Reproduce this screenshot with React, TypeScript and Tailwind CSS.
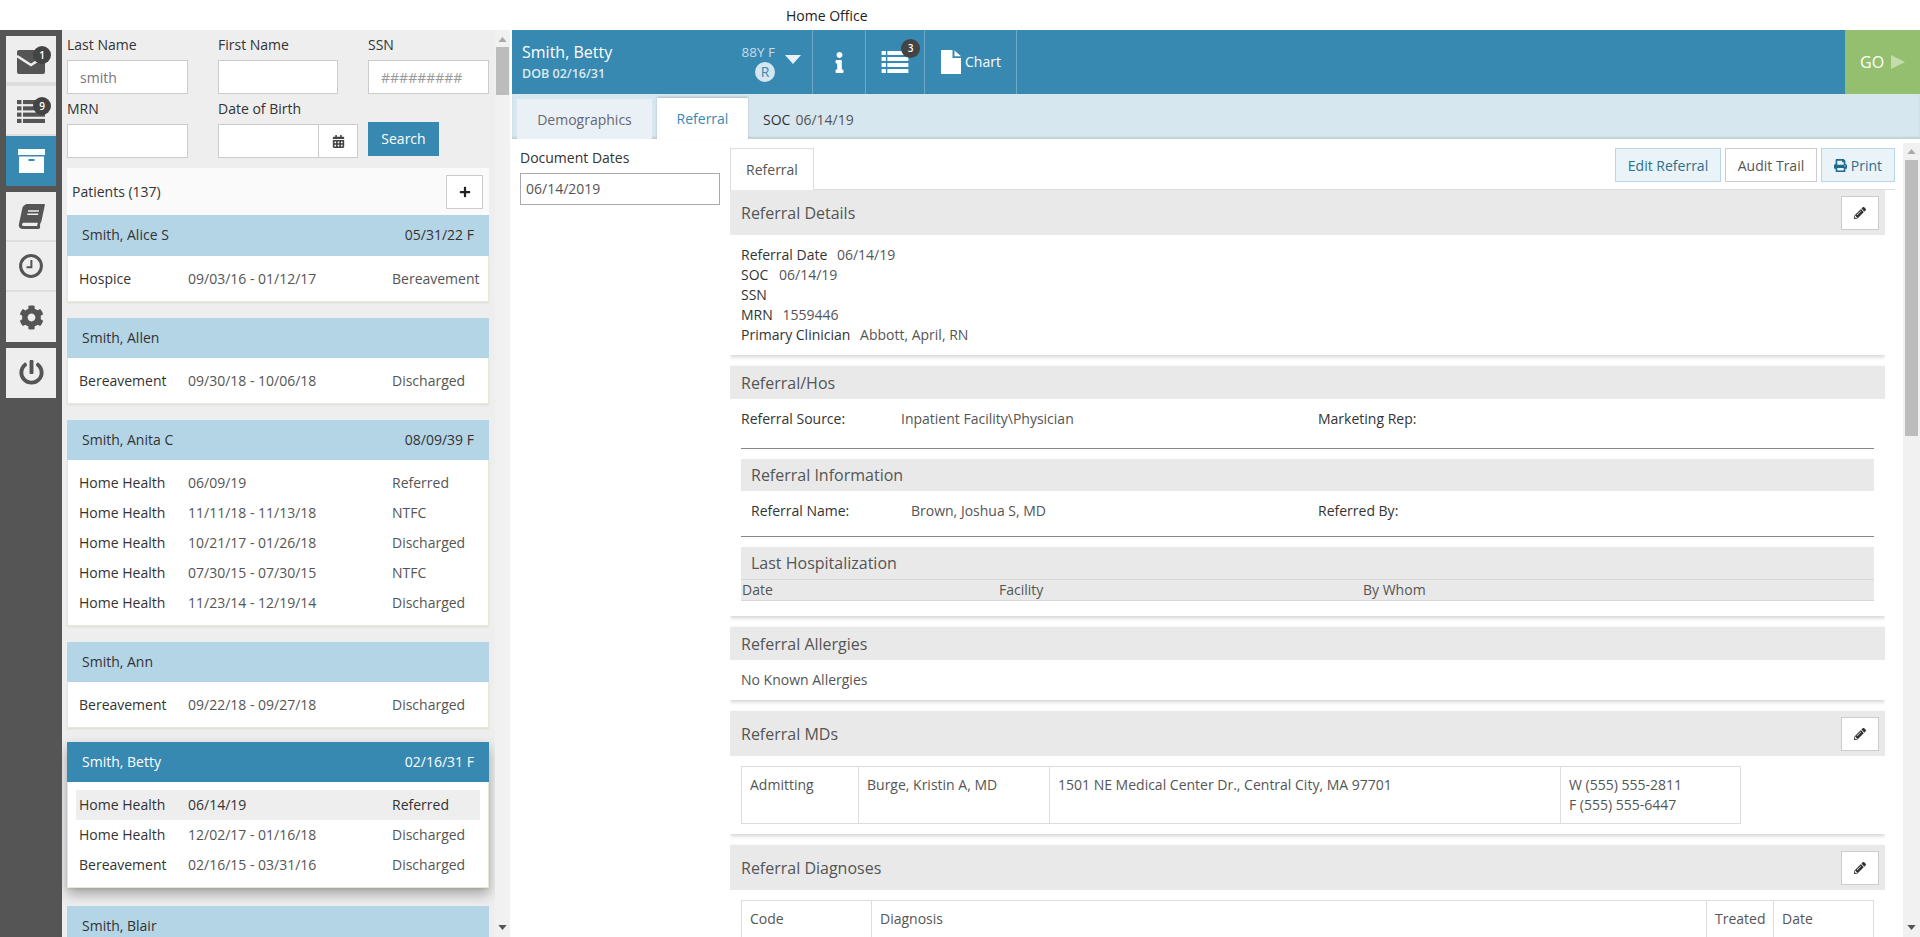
import React from 'react';
import {
  FaBook,
  FaCalendarAlt,
  FaCog,
  FaInfo,
  FaPencilAlt,
  FaPlus,
  FaPowerOff,
  FaPrint,
} from 'react-icons/fa';

const ListIcon = ({ color, className }: { color: string; className?: string }) => (
  <svg viewBox="0 0 28 23" className={className} fill={color}>
    {[0, 6.3, 12.6, 18.9].map((y) => (
      <g key={y}>
        <rect x="0" y={y} width="4.5" height="4.1" />
        <rect x="6" y={y} width="22" height="4.1" />
      </g>
    ))}
  </svg>
);

const MailIcon = () => (
  <svg viewBox="0 0 28 24" className="w-[28px] h-[24px] mt-[5px]">
    <path d="M2 0h24a2 2 0 0 1 2 2v20a2 2 0 0 1-2 2H2a2 2 0 0 1-2-2V2a2 2 0 0 1 2-2z" fill="#555" />
    <path d="M0 6l14 9 14-9" fill="none" stroke="#eee" strokeWidth="2.6" />
  </svg>
);

const ArchiveIcon = () => (
  <svg viewBox="0 0 27 24" className="w-[27px] h-[24px]">
    <rect x="0" y="0" width="27" height="6" fill="#fff" />
    <rect x="1" y="7.5" width="25" height="16.5" fill="#fff" />
    <rect x="10.5" y="10" width="6" height="2" fill="#3889b2" />
  </svg>
);

const ClockIcon = () => (
  <svg viewBox="0 0 24 24" className="w-[24px] h-[24px]" fill="none" stroke="#555">
    <circle cx="12" cy="12" r="10.4" strokeWidth="3" />
    <path d="M12.4 6v7.2H7.5" strokeWidth="2" />
  </svg>
);

const FileIcon = () => (
  <svg viewBox="0 0 20 24" className="w-[20px] h-[24px]" fill="#fff">
    <path d="M0 0h11.5v8H20v16H0z" />
    <path d="M13.5 0.5L20 6.2h-6.5z" />
  </svg>
);

const Arrow = ({ down }: { down?: boolean }) => (
  <svg viewBox="0 0 10 6" className="w-[9px] h-[5px]" fill={down ? '#555' : '#aaa'}>
    <polygon points={down ? '0,0 10,0 5,6' : '0,6 10,6 5,0'} />
  </svg>
);

const Badge = ({ n, className }: { n: number; className: string }) => (
  <span className={`absolute w-[18px] h-[18px] rounded-full bg-[#444] text-white text-[10px] font-semibold flex items-center justify-center ${className}`}>
    {n}
  </span>
);

const cards = [
  {
    name: 'Smith, Alice S',
    dob: '05/31/22 F',
    first: true,
    rows: [['Hospice', '09/03/16 - 01/12/17', 'Bereavement']],
  },
  {
    name: 'Smith, Allen',
    dob: '',
    rows: [['Bereavement', '09/30/18 - 10/06/18', 'Discharged']],
  },
  {
    name: 'Smith, Anita C',
    dob: '08/09/39 F',
    rows: [
      ['Home Health', '06/09/19', 'Referred'],
      ['Home Health', '11/11/18 - 11/13/18', 'NTFC'],
      ['Home Health', '10/21/17 - 01/26/18', 'Discharged'],
      ['Home Health', '07/30/15 - 07/30/15', 'NTFC'],
      ['Home Health', '11/23/14 - 12/19/14', 'Discharged'],
    ],
  },
  {
    name: 'Smith, Ann',
    dob: '',
    rows: [['Bereavement', '09/22/18 - 09/27/18', 'Discharged']],
  },
  {
    name: 'Smith, Betty',
    dob: '02/16/31 F',
    active: true,
    rows: [
      ['Home Health', '06/14/19', 'Referred'],
      ['Home Health', '12/02/17 - 01/16/18', 'Discharged'],
      ['Bereavement', '02/16/15 - 03/31/16', 'Discharged'],
    ],
  },
];

const PatientCard = ({ card }: { card: (typeof cards)[number] }) => (
  <div className={card.active ? '-mt-[2px] mb-[2px] shadow-[0_6px_12px_rgba(0,0,0,0.32)]' : ''}>
    <div className={`${card.first ? 'h-[41px]' : 'h-[40px]'} pl-[15px] pr-[15px] pb-[2px] flex items-center justify-between text-[14px] ${card.active ? 'bg-[#3889b2] text-white' : 'bg-[#b4d5e6] text-[#333]'}`}>
      <span>{card.name}</span>
      <span>{card.dob}</span>
    </div>
    <div className="bg-white border-x border-b border-[#e3ead8] pt-[8px] pb-[7px] px-[8px] shadow-[0_1px_2px_rgba(0,0,0,0.08)]">
      {card.rows.map((row, i) => (
        <div key={i} className={`h-[30px] pb-[2px] flex items-center pl-[3px] text-[14px] ${card.active && i === 0 ? 'bg-[#eee]' : ''}`}>
          <span className="w-[109px] text-[#333]">{row[0]}</span>
          <span className={`w-[204px] ${card.active && i === 0 ? 'text-[#333]' : 'text-[#555]'}`}>{row[1]}</span>
          <span className={card.active && i === 0 ? 'text-[#333]' : 'text-[#555]'}>{row[2]}</span>
        </div>
      ))}
    </div>
  </div>
);

const PencilButton = ({ className }: { className?: string }) => (
  <button className={`w-[38px] h-[34px] bg-white border border-[#ccc] flex items-center justify-center ${className ?? ''}`}>
    <FaPencilAlt className="text-[12px] text-[#333]" />
  </button>
);

const SectionHeader = ({ title, h, pencil }: { title: string; h: string; pencil?: boolean }) => (
  <div className={`${h} bg-[#e9e9e9] pl-[11px] pr-[6px] flex items-center justify-between`}>
    <span className="text-[16px] text-[#555]">{title}</span>
    {pencil && <PencilButton />}
  </div>
);

const Section = ({ children, className }: { children: React.ReactNode; className?: string }) => (
  <section className={`bg-white shadow-[0_2px_4px_rgba(0,0,0,0.18)] mb-[11px] ${className ?? ''}`}>{children}</section>
);

const sideBtn = 'relative mx-[6px] w-[50px] flex items-center justify-center bg-[#eee]';

export default function App() {
  return (
    <div className="w-[1920px] h-[937px] overflow-hidden bg-white flex flex-col text-[14px] text-[#333] font-['Open_Sans',sans-serif]">
      <div className="h-[30px] shrink-0 flex items-center pl-[786px] text-[14px] text-[#222]">Home Office</div>

      <div className="flex flex-1 min-h-0">
        {/* icon rail */}
        <nav className="w-[62px] shrink-0 bg-[#555] pt-[6px] flex flex-col">
          <div className={`${sideBtn} h-[46px] mb-[4px] shadow-[0_4px_0_#ddd]`}>
            <MailIcon />
            <Badge n={1} className="left-[27px] top-[10px]" />
          </div>
          <div className={`${sideBtn} h-[48px] mb-[2px] shadow-[0_2px_0_#ddd]`}>
            <ListIcon color="#555" className="w-[28px] h-[23px] mt-[2px]" />
            <Badge n={9} className="left-[27px] top-[11px]" />
          </div>
          <div className={`${sideBtn} h-[50px] !bg-[#3889b2] mb-[6px]`}>
            <ArchiveIcon />
          </div>
          <div className={`${sideBtn} h-[48px] mb-[2px] shadow-[0_2px_0_#ddd]`}>
            <FaBook className="text-[25px] text-[#555] -skew-x-12" />
          </div>
          <div className={`${sideBtn} h-[48px] mb-[2px] shadow-[0_2px_0_#ddd]`}>
            <ClockIcon />
          </div>
          <div className={`${sideBtn} h-[50px] mb-[6px]`}>
            <FaCog className="text-[25px] text-[#555]" />
          </div>
          <div className={`${sideBtn} h-[50px]`}>
            <FaPowerOff className="text-[25px] text-[#555] -mt-[2px]" />
          </div>
        </nav>

        {/* patient search */}
        <aside className="w-[448px] shrink-0 flex bg-[#eee]">
          <div className="w-[433px] pl-[5px] overflow-hidden">
            <div className="w-[422px] pt-[5px] grid grid-cols-[151px_150px_121px] gap-y-[5px]">
              <div>
                <div className="h-[20px] leading-[20px]">Last Name</div>
                <input defaultValue="smith" className="mt-[5px] w-[121px] h-[34px] px-[12px] bg-white border border-[#ccc] text-[14px] text-[#777] outline-none" />
              </div>
              <div>
                <div className="h-[20px] leading-[20px]">First Name</div>
                <input className="mt-[5px] w-[120px] h-[34px] px-[12px] bg-white border border-[#ccc] outline-none" />
              </div>
              <div>
                <div className="h-[20px] leading-[20px]">SSN</div>
                <input placeholder="#########" className="mt-[5px] w-[121px] h-[34px] px-[12px] bg-white border border-[#ccc] text-[14px] outline-none placeholder:text-[#999]" />
              </div>
              <div>
                <div className="h-[20px] leading-[20px]">MRN</div>
                <input className="mt-[5px] w-[121px] h-[34px] px-[12px] bg-white border border-[#ccc] outline-none" />
              </div>
              <div>
                <div className="h-[20px] leading-[20px]">Date of Birth</div>
                <div className="mt-[5px] w-[140px] h-[34px] flex bg-white border border-[#ccc]">
                  <input className="w-[100px] px-[12px] border-r border-[#ccc] outline-none" />
                  <div className="flex-1 flex items-center justify-center">
                    <FaCalendarAlt className="text-[13px] text-[#444]" />
                  </div>
                </div>
              </div>
              <div className="pt-[23px]">
                <button className="w-[71px] h-[34px] pb-[2px] bg-[#3889b2] text-white text-[14px]">Search</button>
              </div>
            </div>

            <div className="w-[422px] mt-[10px] h-[47px] bg-[#fafafa] pl-[5px] pr-[6px] flex items-center justify-between">
              <span>Patients (137)</span>
              <button className="w-[37px] h-[34px] bg-white border border-[#ccc] flex items-center justify-center">
                <FaPlus className="text-[12px] text-[#222]" />
              </button>
            </div>

            <div className="w-[422px] flex flex-col gap-[16px]">
              {cards.map((card) => (
                <PatientCard key={card.name} card={card} />
              ))}
              <div className="h-[40px] bg-[#b4d5e6] pl-[15px] pb-[2px] flex items-center text-[14px]">Smith, Blair</div>
            </div>
          </div>
          <div className="w-[15px] shrink-0 bg-[#f1f1f1] flex flex-col items-center justify-between pt-[7px] pb-[7px]">
            <Arrow />
            <div className="w-[13px] h-[48px] bg-[#bcbcbc] mt-[5px]" />
            <div className="flex-1" />
            <Arrow down />
          </div>
        </aside>

        {/* chart */}
        <main className="ml-[2px] flex-1 min-w-0 flex flex-col">
          <header className="h-[64px] shrink-0 bg-[#3889b2] flex text-white">
            <div className="w-[301px] pl-[10px] pr-[11px] flex items-center justify-between border-r border-[#6fa9c7]">
              <div>
                <div className="text-[16px] leading-[22px]">Smith, Betty</div>
                <div className="text-[12.5px] font-semibold leading-[18px] text-[#dbe9f1] mt-[2px]">DOB 02/16/31</div>
              </div>
              <div className="flex items-center gap-[10px]">
                <div className="flex flex-col items-end">
                  <span className="text-[13.5px] leading-[18px] text-[#c5dbe7]">88Y F</span>
                  <span className="w-[20px] h-[20px] rounded-full bg-[#d5e6ef] text-[#3889b2] text-[14px] flex items-center justify-center mt-[1px]">R</span>
                </div>
                <svg viewBox="0 0 16 9" className="w-[16px] h-[9px] mb-[6px]" fill="#e8f1f6">
                  <polygon points="0,0 16,0 8,9" />
                </svg>
              </div>
            </div>
            <div className="w-[53px] flex items-center justify-center border-r border-[#6fa9c7]">
              <FaInfo className="text-[21px] text-white" />
            </div>
            <div className="relative w-[59px] flex items-center justify-center border-r border-[#6fa9c7]">
              <ListIcon color="#fff" className="w-[28px] h-[22px]" />
              <Badge n={3} className="left-[35px] top-[9px] w-[19px] h-[19px]" />
            </div>
            <div className="w-[92px] pl-[16px] flex items-center gap-[4px] border-r border-[#6fa9c7]">
              <FileIcon />
              <span className="-mt-[2px]">Chart</span>
            </div>
            <div className="flex-1" />
            <div className="w-[75px] bg-[#93bf6f] pl-[15px] flex items-center gap-[7px]">
              <span className="text-[16px]">GO</span>
              <svg viewBox="0 0 14 14" className="w-[14px] h-[14px]" fill="#c3dcae">
                <polygon points="0,0 14,7 0,14" />
              </svg>
            </div>
          </header>

          <div className="h-[45px] shrink-0 bg-[#d7e7ef] pl-[5px] flex items-end shadow-[inset_0_-2px_2px_rgba(0,0,0,0.1)]">
            <div className="w-[135px] h-[40px] bg-[#e9f1f6] flex items-center justify-center text-[#667]">Demographics</div>
            <div className="ml-[5px] w-[91px] h-[41px] bg-white flex items-center justify-center text-[#3889b2] shadow-[0_-1px_2px_rgba(0,0,0,0.2)]">Referral</div>
            <div className="ml-[15px] h-[40px] flex items-center gap-[5px]">
              <span>SOC</span>
              <span className="text-[#555]">06/14/19</span>
            </div>
          </div>

          <div className="flex-1 min-h-0 flex">
            <div className="w-[218px] shrink-0 pl-[8px] pt-[9px]">
              <div className="h-[20px] leading-[20px]">Document Dates</div>
              <div className="mt-[5px] w-[200px] h-[32px] border border-[#aaa] pl-[5px] pb-[2px] flex items-center text-[#555]">06/14/2019</div>
            </div>

            <div className="w-[1165px] shrink-0 pt-[9px] flex flex-col min-h-0 overflow-hidden">
              <div className="h-[42px] shrink-0 flex justify-between border-b border-[#ddd]">
                <div className="w-[84px] h-[42px] bg-white border border-b-0 border-[#ddd] flex items-center justify-center text-[#555]">Referral</div>
                <div className="flex gap-[4px] h-[34px]">
                  <button className="w-[106px] bg-[#eaf3f8] border border-[#b9d6e6] text-[#2d6f8e]">Edit Referral</button>
                  <button className="w-[92px] bg-white border border-[#ccc] text-[#555]">Audit Trail</button>
                  <button className="w-[74px] bg-[#eaf3f8] border border-[#b9d6e6] text-[#2d6f8e] flex items-center justify-center gap-[4px]">
                    <FaPrint className="text-[13px] text-[#1d6a8e]" />
                    Print
                  </button>
                </div>
              </div>

              <div className="w-[1155px] flex-1 min-h-0 overflow-hidden">
                <Section>
                  <SectionHeader title="Referral Details" h="h-[45px]" pencil />
                  <div className="pl-[11px] pt-[10px] pb-[10px] leading-[20px]">
                    <div>Referral Date <span className="ml-[6px] text-[#555]">06/14/19</span></div>
                    <div>SOC <span className="ml-[7px] text-[#555]">06/14/19</span></div>
                    <div>SSN</div>
                    <div>MRN <span className="ml-[6px] text-[#555]">1559446</span></div>
                    <div>Primary Clinician <span className="ml-[6px] text-[#555]">Abbott, April, RN</span></div>
                  </div>
                </Section>

                <Section>
                  <SectionHeader title="Referral/Hos" h="h-[33px]" />
                  <div className="px-[11px] pt-[10px] pb-[15px] leading-[20px]">
                    <div className="flex">
                      <span className="w-[160px]">Referral Source:</span>
                      <span className="w-[417px] text-[#555]">Inpatient Facility\Physician</span>
                      <span>Marketing Rep:</span>
                    </div>
                    <div className="mt-[19px] border-t border-[#888]" />
                    <div className="mt-[10px] h-[32px] bg-[#e9e9e9] pl-[10px] flex items-center text-[16px] text-[#555]">Referral Information</div>
                    <div className="mt-[10px] pl-[10px] flex">
                      <span className="w-[160px]">Referral Name:</span>
                      <span className="w-[407px] text-[#555]">Brown, Joshua S, MD</span>
                      <span>Referred By:</span>
                    </div>
                    <div className="mt-[15px] border-t border-[#888]" />
                    <div className="mt-[10px] h-[32px] bg-[#e9e9e9] pl-[10px] flex items-center text-[16px] text-[#555]">Last Hospitalization</div>
                    <div className="h-[22px] bg-[#e9e9e9] border-y border-[#d8d8d8] pl-[1px] flex items-center text-[#555]">
                      <span className="w-[257px]">Date</span>
                      <span className="w-[364px]">Facility</span>
                      <span>By Whom</span>
                    </div>
                  </div>
                </Section>

                <Section>
                  <SectionHeader title="Referral Allergies" h="h-[33px]" />
                  <div className="h-[40px] pl-[11px] pb-[2px] flex items-center text-[#555]">No Known Allergies</div>
                </Section>

                <Section>
                  <SectionHeader title="Referral MDs" h="h-[45px]" pencil />
                  <div className="pl-[11px] pt-[10px] pb-[10px]">
                    <table className="w-[1000px] table-fixed text-[#555] leading-[20px]">
                      <tbody>
                        <tr className="h-[57px]">
                          <td className="w-[117px] border border-[#ddd] px-[8px] pt-[8px] align-top">Admitting</td>
                          <td className="w-[191px] border border-[#ddd] px-[8px] pt-[8px] align-top">Burge, Kristin A, MD</td>
                          <td className="w-[511px] border border-[#ddd] px-[8px] pt-[8px] align-top">1501 NE Medical Center Dr., Central City, MA 97701</td>
                          <td className="border border-[#ddd] px-[8px] pt-[8px] align-top">W (555) 555-2811<br />F (555) 555-6447</td>
                        </tr>
                      </tbody>
                    </table>
                  </div>
                </Section>

                <Section>
                  <SectionHeader title="Referral Diagnoses" h="h-[45px]" pencil />
                  <div className="pl-[11px] pt-[10px] pb-[11px]">
                    <table className="w-[1133px] table-fixed text-[#555] leading-[20px]">
                      <tbody>
                        <tr className="h-[57px]">
                          <td className="w-[130px] border border-[#ddd] px-[8px] pt-[8px] align-top">Code</td>
                          <td className="w-[835px] border border-[#ddd] px-[8px] pt-[8px] align-top">Diagnosis</td>
                          <td className="w-[67px] border border-[#ddd] px-[8px] pt-[8px] align-top">Treated</td>
                          <td className="border border-[#ddd] px-[8px] pt-[8px] align-top">Date</td>
                        </tr>
                      </tbody>
                    </table>
                  </div>
                </Section>
              </div>
            </div>

            <div className="ml-[8px] mt-[4px] w-[17px] shrink-0 bg-[#f1f1f1] flex flex-col items-center pt-[6px] pb-[7px]">
              <Arrow />
              <div className="w-[13px] h-[276px] bg-[#bcbcbc] mt-[6px]" />
              <div className="flex-1" />
              <Arrow down />
            </div>
          </div>
        </main>
      </div>
    </div>
  );
}
